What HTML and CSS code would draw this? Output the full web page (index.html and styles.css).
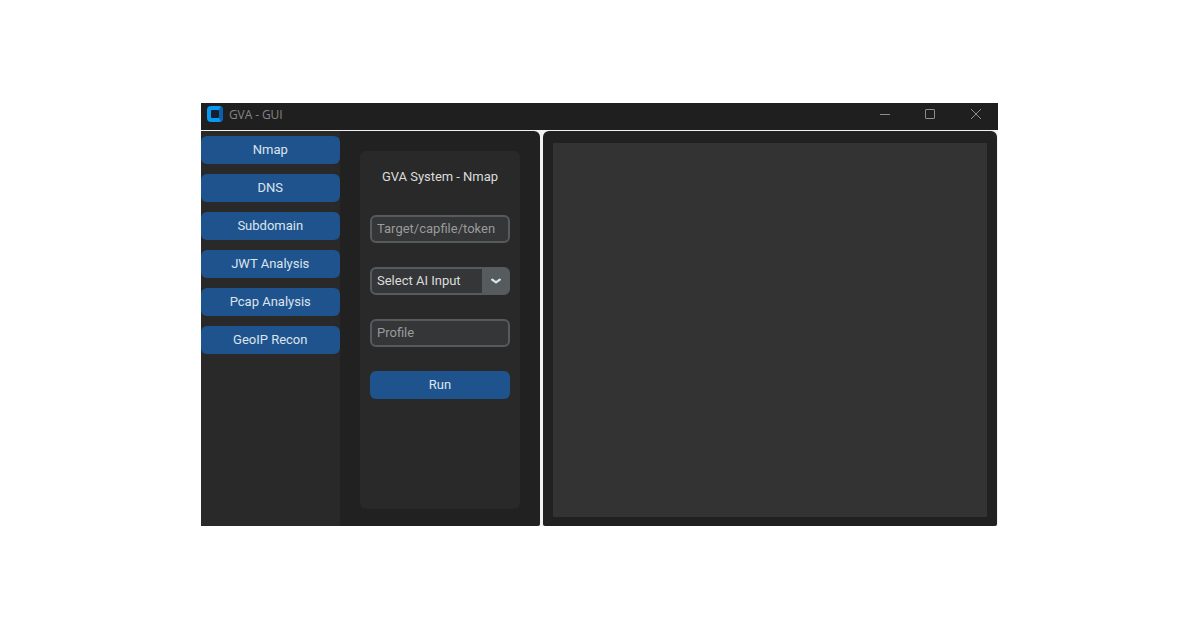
FILE: index.html
```
<!DOCTYPE html>
<html lang="en">
<head>
    <meta charset="UTF-8">
    <title>GVA - GUI</title>
    <link rel="stylesheet" href="styles.css">
</head>
<body>
    <div class="window">
        <div class="titlebar">
            <svg class="logo" width="16" height="16" viewBox="0 0 16 16">
                <rect width="16" height="16" rx="4" fill="#0a98f5"/>
                <path d="M12 4l2-3.4a4 4 0 0 1 2 3.4v8a4 4 0 0 1-2 3.4L12 12z" fill="#0860ae"/>
                <rect x="4" y="4" width="8" height="8" rx="1" fill="#17202a"/>
            </svg>
            <span class="title">GVA - GUI</span>
            <svg class="controls" width="102" height="12" viewBox="0 0 102 12" fill="none" stroke="#8c8c8c">
                <path d="M0 6.5h10"/>
                <rect x="45.5" y="1.5" width="9" height="9" rx="0.5"/>
                <path d="M91 1l10 10M101 1l-10 10"/>
            </svg>
        </div>
        <div class="content">
            <div class="left">
                <div class="sidebar">
                    <button class="btn">Nmap</button>
                    <button class="btn">DNS</button>
                    <button class="btn">Subdomain</button>
                    <button class="btn">JWT Analysis</button>
                    <button class="btn">Pcap Analysis</button>
                    <button class="btn">GeoIP Recon</button>
                </div>
                <div class="form">
                    <div class="heading">GVA System - Nmap</div>
                    <input class="field" type="text" placeholder="Target/capfile/token">
                    <div class="field select">
                        <span>Select AI Input</span>
                        <div class="arrow">
                            <svg width="10" height="6" viewBox="0 0 10 6" fill="none" stroke="#dce4ee" stroke-width="2.2" stroke-linecap="round" stroke-linejoin="round">
                                <path d="M1.2 1.6L5 4.4l3.8-2.8"/>
                            </svg>
                        </div>
                    </div>
                    <input class="field" type="text" placeholder="Profile">
                    <button class="btn">Run</button>
                </div>
            </div>
            <div class="right">
                <div class="output"></div>
            </div>
        </div>
    </div>
</body>
</html>
```
FILE: styles.css
```
* {
    box-sizing: border-box;
}
body {
    margin: 0;
    background-color: #fff;
    font-family: Roboto, sans-serif;
    font-size: 13px;
    color: #dce4ee;
}
.window {
    width: 797px;
    height: 423px;
    margin: 103px 0 0 201px;
    display: flex;
    flex-direction: column;
}
.titlebar {
    height: 27px;
    display: flex;
    align-items: flex-start;
    padding: 3px 16px 0 6px;
    background-color: #1f1f1f;
}
.title {
    margin-left: 6px;
    font-family: "Open Sans", sans-serif;
    font-size: 12px;
    line-height: 17px;
    letter-spacing: -0.1px;
    color: #858585;
}
.controls {
    margin: 2px 0 0 auto;
}
.content {
    flex: 1;
    display: flex;
    gap: 3px;
    padding: 1px 1px 0 0;
    background-color: #f2f2f2;
}
.left {
    width: 339px;
    display: flex;
    background-color: #212121;
    border-radius: 0 6px 2px 0;
    overflow: hidden;
}
.sidebar {
    width: 139px;
    display: flex;
    flex-direction: column;
    gap: 10px;
    padding-top: 5px;
    background-color: #292929;
}
.btn {
    height: 28px;
    padding: 0 0.5px 2px 0;
    border: none;
    border-radius: 6px;
    background-color: #1f538d;
    color: #dce4ee;
    font: inherit;
    cursor: pointer;
}
.form {
    width: 160px;
    height: 358px;
    margin: 20px 0 0 20px;
    padding: 10px;
    display: flex;
    flex-direction: column;
    gap: 24px;
    background-color: #292929;
    border-radius: 6px;
}
.form .btn {
    padding-right: 0;
}
.heading {
    height: 30px;
    line-height: 31px;
    letter-spacing: -0.04px;
    text-align: center;
    color: #dcdcdc;
}
.field {
    width: 140px;
    height: 28px;
    padding: 0 5px 2px;
    border: 2px solid #565b5e;
    border-radius: 6px;
    background-color: #343638;
    color: #dce4ee;
    font: inherit;
}
.field::placeholder {
    color: #9a9a98;
}
.select {
    display: flex;
    justify-content: space-between;
    padding: 0 0 0 5px;
    line-height: 23px;
    color: #dcdcdc;
}
.arrow {
    width: 26px;
    height: 100%;
    display: flex;
    align-items: center;
    justify-content: center;
    padding-left: 2px;
    background-color: #565b5e;
}
.right {
    flex: 1;
    display: flex;
    padding: 12px 10px 9px;
    background-color: #212121;
    border-radius: 6px 6px 2px 2px;
}
.output {
    flex: 1;
    background-color: #333;
}
```
